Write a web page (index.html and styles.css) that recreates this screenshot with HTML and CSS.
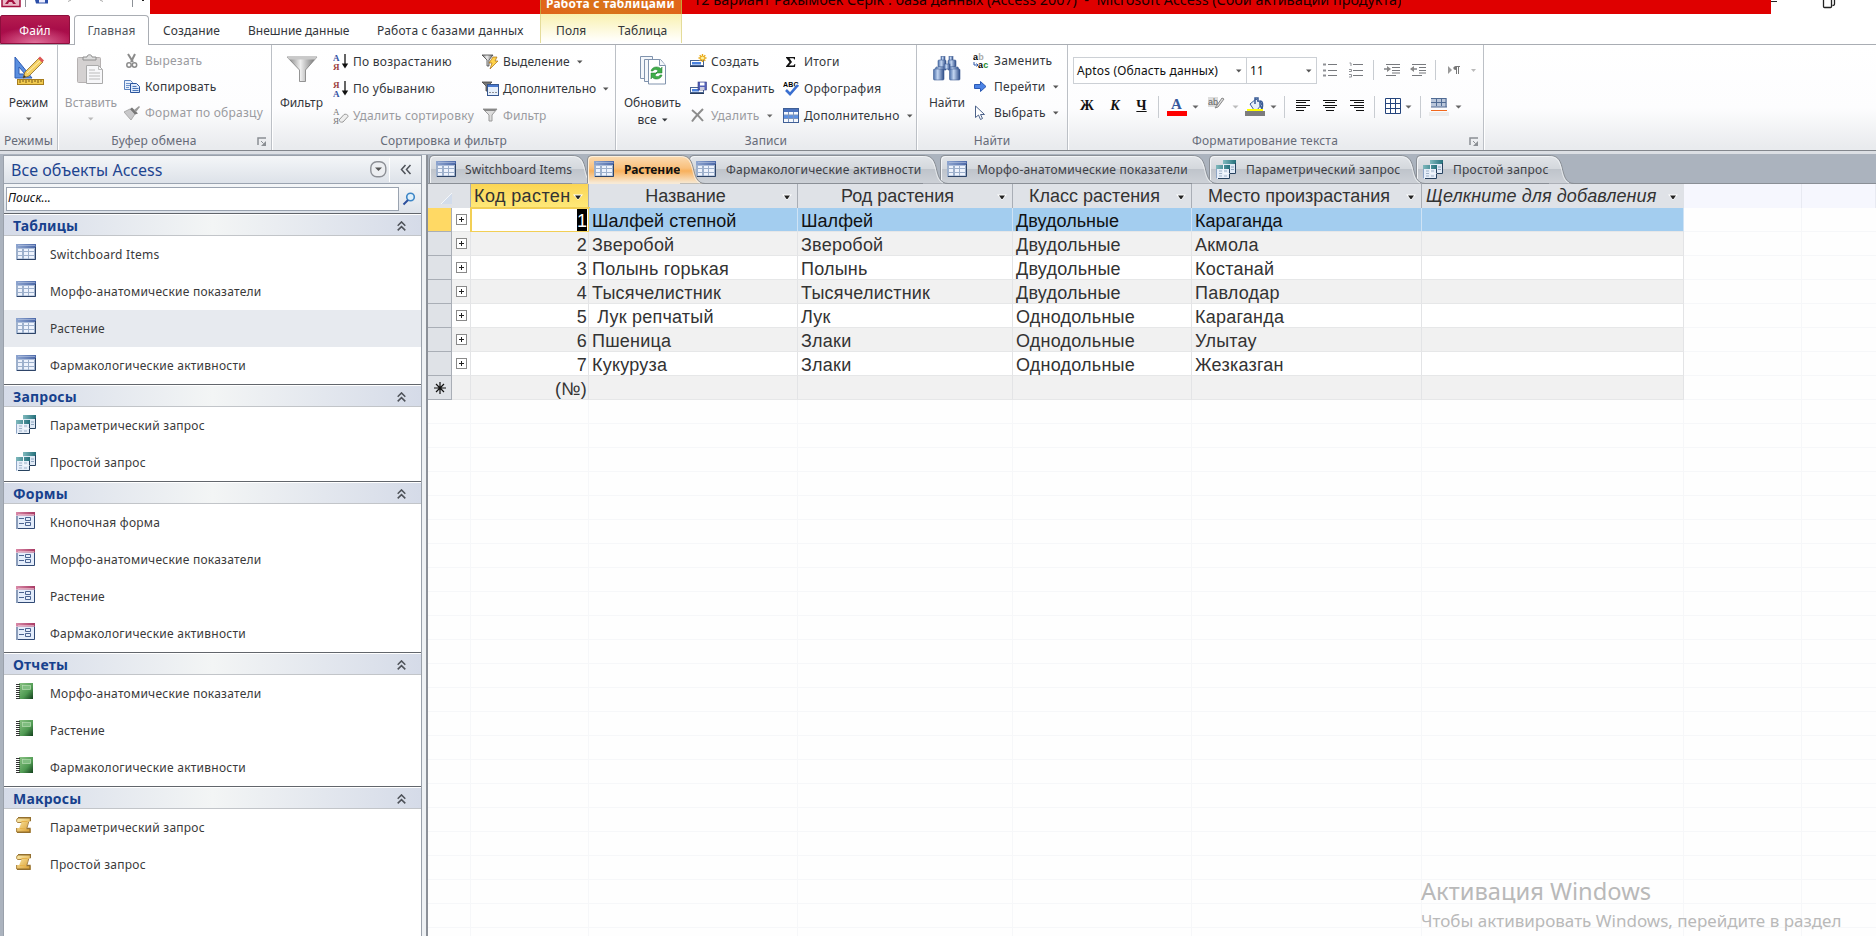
FILE: index.html
```html
<!DOCTYPE html>
<html lang="ru">
<head>
<meta charset="utf-8">
<title>Microsoft Access</title>
<link rel="stylesheet" href="styles.css">
</head>
<body>
<svg class="defs" aria-hidden="true">
  <defs>
    <linearGradient id="gTab" x1="0" y1="0" x2="0" y2="1"><stop offset="0" stop-color="#e2e5e9"/><stop offset=".5" stop-color="#d3d7dc"/><stop offset=".5" stop-color="#bfc4cb"/><stop offset="1" stop-color="#cdd1d7"/></linearGradient>
    <linearGradient id="gAct" x1="0" y1="0" x2="0" y2="1"><stop offset="0" stop-color="#fbdcb4"/><stop offset=".45" stop-color="#f9c07c"/><stop offset=".55" stop-color="#f8b05c"/><stop offset="1" stop-color="#f7ead6"/></linearGradient>
    <linearGradient id="gFun" x1="0" x2="1"><stop offset="0" stop-color="#777"/><stop offset=".45" stop-color="#eee"/><stop offset="1" stop-color="#666"/></linearGradient>
    <linearGradient id="gBlue" x1="0" x2="1"><stop offset="0" stop-color="#4a6ea8"/><stop offset=".4" stop-color="#c3d6f2"/><stop offset="1" stop-color="#2b4a86"/></linearGradient>
    <linearGradient id="gHead" x1="0" x2="1"><stop offset="0" stop-color="#8fa6d0"/><stop offset="1" stop-color="#4c68a8"/></linearGradient>
    <linearGradient id="gTeal" x1="0" x2="1"><stop offset="0" stop-color="#7fb9bd"/><stop offset="1" stop-color="#24707b"/></linearGradient>
    <linearGradient id="gRose" x1="0" x2="1"><stop offset="0" stop-color="#d98aa8"/><stop offset="1" stop-color="#a83a64"/></linearGradient>
    <linearGradient id="gGreen" x1="0" y1="0" x2="1" y2="1"><stop offset="0" stop-color="#8cc486"/><stop offset=".6" stop-color="#4f9a52"/><stop offset="1" stop-color="#123f1c"/></linearGradient>
    <linearGradient id="gGold" x1="0" y1="0" x2="1" y2="1"><stop offset="0" stop-color="#fdf0b4"/><stop offset="1" stop-color="#d99a2a"/></linearGradient>
  </defs>
  <symbol id="table" viewBox="0 0 20 17">
    <rect width="20" height="16" fill="#9db0cc"/><rect width="20" height="4" fill="url(#gHead)"/>
    <path d="M2 4.500h17M2 1.500h17" stroke="#b9c8e4" stroke-width=".6"/>
    <g fill="#eef3fd"><rect x="2" y="5" width="4" height="2"/><rect x="8" y="5" width="4" height="2"/><rect x="13" y="5" width="5" height="2"/><rect x="2" y="8" width="4" height="3"/><rect x="8" y="8" width="4" height="3"/><rect x="13" y="8" width="5" height="3"/><rect x="2" y="12" width="4" height="2.500"/><rect x="8" y="12" width="4" height="2.500"/><rect x="13" y="12" width="5" height="2.500"/></g>
    <path d="M19.500 3v12.500H1" fill="none" stroke="#2e4468"/>
  </symbol>
  <symbol id="query" viewBox="0 0 20 19">
    <rect x="7" width="13" height="14" fill="#dfe9f5"/><rect x="7" width="13" height="4" fill="url(#gTeal)"/><path d="M19.500 3v10.500H8" fill="none" stroke="#27425f"/><path d="M15 7h3M15 9.500h3" stroke="#8fa6bf"/>
    <rect y="5" width="14" height="14" fill="#e6eef9"/><rect y="5" width="14" height="4" fill="url(#gTeal)"/><path d="M.5 9v9.500" stroke="#8fa6c6"/><path d="M13.500 9v9.500H2" fill="none" stroke="#27425f"/><path d="M3 11h3M3 13.500h3M3 16h3M8 11h3M8 13.500h3M8 16h3" stroke="#9fb2c8"/><path d="M7.500 5v8.500h6" fill="none" stroke="#f4f8fc"/>
  </symbol>
  <symbol id="form" viewBox="0 0 19 17">
    <rect width="19" height="17" fill="#e4edfb"/><path d="M0 4h2v13H0z" fill="#8b9dba"/><rect width="19" height="3.500" fill="url(#gRose)"/><path d="M2 2.500h16" stroke="#efc0d0" stroke-width=".7"/><path d="M18.500 3.500v13H2" fill="none" stroke="#314a75"/><path d="M3 6.500h5M3 11.500h5M9.500 5.500h5v3h-5zM9.500 10.500h5v3h-5z" fill="none" stroke="#4a6391"/>
  </symbol>
  <symbol id="report" viewBox="0 0 17 16">
    <rect x="3" width="14" height="16" fill="url(#gGreen)"/><path d="M0 1.500h4M0 3.500h4M0 5.500h4M0 7.500h4M0 9.500h4M0 11.500h4M0 13.500h4M0 15.500h4" stroke="#333"/><rect x="6.500" y="2.500" width="8" height="4" fill="#7fbd80" stroke="#b7dcb2" stroke-width=".7"/>
  </symbol>
  <symbol id="macro" viewBox="0 0 15 16">
    <path d="M1 1h13v3.500h-1.500L10.500 12h4v3.500H.5V11h2.700L5.500 5.500H1.500C0 4.500 0 2 1 1z" fill="url(#gGold)"/><path d="M2 .8h12.500v3.500M10.500 11.500h3.500v3.700H1" stroke="#94702f" stroke-width="1.400" fill="none"/><path d="M12.800 4.500l-2 7M5.500 5.500H1.500C0 4.500.5 2 2 1M.6 11v4" stroke="#a98343" fill="none"/><path d="M5.500 4.500h6M4 11.500h5" stroke="#e6b24a"/>
  </symbol>
  <symbol id="caret" viewBox="0 0 6 4"><path d="M0 .5h5.500L2.750 3.500z" fill="currentColor"/></symbol>
  <symbol id="launch" viewBox="0 0 10 9"><path d="M1 8V1h8" fill="none" stroke="#8b8f94" stroke-width="1.500"/><path d="M4 4l2.500 2.500" stroke="#8b8f94"/><path d="M9 4v5H4z" fill="#8b8f94"/></symbol>
  <symbol id="chev" viewBox="0 0 9 10"><path d="M.7 4.700L4.500.9l3.800 3.800M.7 9.400l3.800-3.800 3.800 3.800" fill="none" stroke="#4e5259" stroke-width="1.500"/></symbol>
  <symbol id="tail" viewBox="0 0 26 29"><path class="fill" d="M0 .5C8 .5 11 4 13 12c2 9 4 16.500 12 16.500H0z"/><path d="M0 .5C8 .5 11 4 13 12c2 9 4 16.500 12 16.500" fill="none" stroke="#8a8f96"/><path d="M0 1.500C7 1.500 10 5 12 12.500c2 8.500 3 13.500 8 15.500" fill="none" stroke="#f4f6f8" stroke-opacity=".7"/></symbol>
  <symbol id="drop" viewBox="0 0 10 6"><path d="M0 .5h10L5 6z" fill="#fff"/><path d="M2 1.500h6L5.500 5h-1z" fill="#222"/></symbol>
</svg>

<header class="title">
  <div class="quick">
    <svg width="150" height="8" viewBox="0 0 150 8"><path d="M2 0v6.500h18V0" fill="#e9b8c6" stroke="#a3123f" stroke-width="1.500"/><path d="M5 4l3-4h5l3 4h-3l-1-2H9L8 4z" fill="#a3123f"/><path d="M25.500 0v7M132.500 0v7" stroke="#8d9197"/><path d="M35 0h13v3.500H36z" fill="#2b4ea8"/><rect x="39" width="6" height="2.500" fill="#eef"/><path d="M68 1.500l3-1.500M100 0l3 1.500" stroke="#aaa"/><rect x="142" width="2" height="1" fill="#222"/></svg>
  </div>
  <div class="titlebar"><div class="context-title"><span>Работа с таблицами</span></div><div class="doc-title"><span>12 вариант Рахымбек Серік : база данных (Access 2007)  -  Microsoft Access (Сбой активации продукта)</span></div></div>
  <svg class="winctl" width="105" height="9" viewBox="0 0 105 9"><path d="M0 1.500h6" stroke="#222"/><path d="M52.500 0v6.500c0 1 .5 1 1 1h6c1 0 1 0 1-1V0M63.500 0v4c0 1-1 1.500-2 1.500" fill="none" stroke="#222" stroke-width="1.300"/></svg>
</header>

<nav class="tabs">
  <span class="tab file">Файл</span><span class="tab home">Главная</span><span class="tab t1">Создание</span><span class="tab t2">Внешние данные</span><span class="tab t3">Работа с базами данных</span>
  <div class="context"><span>Поля</span><span>Таблица</span></div>
</nav>

<section class="ribbon">
  <div class="group g1">
    <div class="body"><div class="big b-mode"><svg width="30" height="30" viewBox="0 0 30 30"><path d="M1 1l17 21H1z" fill="#5a8fe0" stroke="#2d5cb4"/><path d="M5 11l6 7H5z" fill="#fff" stroke="#2d5cb4"/><path d="M9 22l2-6L25 2l4 4-14 14z" fill="#f3cf62" stroke="#8a6a26" stroke-width=".8"/><path d="M13 17L27 4" stroke="#fff3b8"/><path d="M24 2.500L26 .5l4 4-2 2z" fill="#d55"/><path d="M9 22l1-3 2 2z" fill="#333"/><rect x="3.500" y="23.500" width="26" height="5" fill="#f0c94e" stroke="#a77d1d"/><path d="M6 24v3M9 24v2M12 24v3M15 24v2M18 24v3M21 24v2M24 24v3M27 24v2" stroke="#7a5a14"/></svg><b>Режим</b><svg class="car" width="6" height="4"><use href="#caret"/></svg></div></div>
    <footer><span>Режимы</span></footer>
  </div>
  <div class="group g2">
    <div class="body"><div class="big b-paste off"><svg width="28" height="31" viewBox="0 0 28 31"><rect x=".5" y="3.500" width="23" height="25" rx="1" fill="#d4d1d1" stroke="#b5b1b1"/><path d="M6 6V3h4c0-3 5-3 5 0h4v3z" fill="#ddd" stroke="#8e8e8e"/><path d="M9.500 11.500h12l4 4v14h-16z" fill="#f7f7f9" stroke="#aaa"/><path d="M21.500 11.500v4h4M12 16h6M12 19h11M12 22h11M12 25h11" fill="none" stroke="#bbb"/></svg><b>Вставить</b><svg class="car" width="6" height="4"><use href="#caret"/></svg></div>
      <div class="rows r26">
        <div class="off"><svg width="17" height="16" viewBox="0 0 17 16"><path d="M4 1l5 8M11 1L7 9" stroke="#8b8b8b" stroke-width="2" fill="none"/><circle cx="5" cy="12" r="2.200" fill="none" stroke="#8b8b8b" stroke-width="1.500"/><circle cx="10.500" cy="12" r="2.200" fill="none" stroke="#8b8b8b" stroke-width="1.500"/></svg><span>Вырезать</span></div>
        <div><svg width="17" height="16" viewBox="0 0 17 16"><path d="M.5 1.500h6l2 2v7h-8z" fill="#e8f0fc" stroke="#5c83bd"/><path d="M2 4.500h4M2 6.500h4M2 8.500h3" stroke="#6f94cb"/><path d="M6.500 4.500h6l3 3v6h-9z" fill="#dce8fa" stroke="#2a559d"/><path d="M8.500 7.500h4M8.500 9.500h6M8.500 11.500h6" stroke="#4a76b8"/></svg><span>Копировать</span></div>
        <div class="off"><svg width="17" height="16" viewBox="0 0 17 16"><path d="M0 7l6-3 5 5-4 6z" fill="#c8c8ca" stroke="#aaa"/><path d="M6 4l2-1.500 6 6-3 1z" fill="#777"/><path d="M10 5l5-4 1 1-4 5z" fill="#999"/></svg><span>Формат по образцу</span></div>
      </div></div>
    <footer class="with-launch"><span>Буфер обмена</span><svg class="la" width="10" height="9"><use href="#launch"/></svg></footer>
  </div>
  <div class="group g3">
    <div class="body"><div class="big b-filter"><svg width="32" height="28" viewBox="0 0 32 28"><path d="M1 1h30L19.500 14v11.500h-6V14z" fill="url(#gFun)" stroke="#7c7c7c" stroke-width=".8"/><path d="M1 1h30l-2 2.500H3z" fill="#c9c9c9"/></svg><b>Фильтр</b></div>
      <div class="rows r27 sort">
        <div><svg width="16" height="18" viewBox="0 0 16 18"><text x="0" y="8" class="srt" fill="#3453a4">А</text><text x="0" y="17" class="srt" fill="#9c4040">Я</text><path d="M12 1v12" stroke="#111" stroke-width="1.300"/><path d="M8.800 10.500h6.400L12 15.500z" fill="#111"/></svg><span>По возрастанию</span></div>
        <div><svg width="16" height="18" viewBox="0 0 16 18"><text x="0" y="8" class="srt" fill="#9c4040">Я</text><text x="0" y="17" class="srt" fill="#3453a4">А</text><path d="M12 1v12" stroke="#111" stroke-width="1.300"/><path d="M8.800 10.500h6.400L12 15.500z" fill="#111"/></svg><span>По убыванию</span></div>
        <div class="off"><svg width="16" height="18" viewBox="0 0 16 18"><text x="0" y="8" class="srt thin" fill="#777">А</text><text x="0" y="17" class="srt thin" fill="#777">Я</text><path d="M6 13l5-5.500c1-.8 4.500 0 4 2l-5 5.500c-2 .7-4-.5-4-2z" fill="#eee" stroke="#999"/></svg><span>Удалить сортировку</span></div>
      </div>
      <div class="rows r27 filt">
        <div><svg width="17" height="16" viewBox="0 0 17 16"><path d="M0 1h11L7 6v6H5V6z" fill="url(#gFun)" stroke="#444" stroke-width=".8"/><path d="M11 3h4l-2 4h3l-8 8 2-6H7z" fill="#ffd34a" stroke="#a86f14" stroke-width=".7"/></svg><span class="tight">Выделение</span><svg class="car" width="6" height="4"><use href="#caret"/></svg></div>
        <div><svg width="17" height="16" viewBox="0 0 17 16"><path d="M0 1h10L6 5v5H4V5z" fill="#777" stroke="#444" stroke-width=".8"/><rect x="5.500" y="3.500" width="11" height="11" fill="#e6effb" stroke="#35568f"/><rect x="6" y="4" width="10" height="2" fill="#4a7ad0"/><path d="M7.500 11.500h1M10.500 11.500h1M13.500 11.500h1" stroke="#333"/></svg><span class="tight">Дополнительно</span><svg class="car" width="6" height="4"><use href="#caret"/></svg></div>
        <div class="off"><svg width="17" height="16" viewBox="0 0 17 16"><path d="M1 1h14L10 7v6H7V7z" fill="#ddd" stroke="#999"/><path d="M1 1h14l-2 2H3z" fill="#888"/></svg><span class="tight">Фильтр</span></div>
      </div></div>
    <footer><span>Сортировка и фильтр</span></footer>
  </div>
  <div class="group g4">
    <div class="body"><div class="big b-refresh"><svg width="26" height="30" viewBox="0 0 26 30"><g fill="#f4f7fb" stroke="#8093ad"><path d="M.5.5h12v22H.500z"/><path d="M4.500 3.500h12v22h-12z"/><path d="M8.500 3.500h12l5 6v18.500h-17z" fill="#fff"/><path d="M19.500 3.500v6h6"/></g><path d="M11 15c1-5 8-5 10-2l1-2v6h-6l2-2c-1-2-4-2-5 0z" fill="#3fae49" stroke="#18792a" stroke-width=".5"/><path d="M22 19c-1 5-8 5-10 2l-1 2v-6h6l-2 2c1 2 4 2 5 0z" fill="#3fae49" stroke="#18792a" stroke-width=".5"/></svg><b>Обновить</b><b class="two">все <svg width="6" height="4"><use href="#caret"/></svg></b></div>
      <div class="rows r27 rec1">
        <div><svg width="17" height="16" viewBox="0 0 17 16"><rect x=".5" y="6.500" width="13" height="5" fill="#fff" stroke="#48638f"/><rect x="2" y="8" width="9" height="2.500" fill="#4a82df"/><path d="M0 12.500h14" stroke="#273a5c"/><path d="M12.500 0v8M8.500 4h8M9.700 1.200l5.600 5.600M15.300 1.200L9.700 6.800" stroke="#e8a916" stroke-width="1.400"/><circle cx="12.500" cy="4" r="1.600" fill="#fff2a0"/></svg><span>Создать</span></div>
        <div><svg width="17" height="16" viewBox="0 0 17 16"><rect x=".5" y="6.500" width="13" height="5" fill="#fff" stroke="#48638f"/><rect x="2" y="8" width="7" height="2.500" fill="#4a82df"/><path d="M0 12.500h14" stroke="#273a5c"/><rect x="8" y="1" width="8.500" height="8" fill="#5260b8" stroke="#333a80" stroke-width=".6"/><rect x="10" y="1.500" width="4.500" height="3" fill="#fff"/><rect x="10" y="6" width="4.500" height="3" fill="#ccd"/></svg><span>Сохранить</span></div>
        <div class="off"><svg width="17" height="16" viewBox="0 0 17 16"><path d="M2 2c4 3 7 6 11 11M13 1C9 5 5 9 2 13.500" stroke="#8c8c8c" stroke-width="2" fill="none"/></svg><span>Удалить</span><svg class="car dk" width="6" height="4"><use href="#caret"/></svg></div>
      </div>
      <div class="rows r27 rec2">
        <div><svg width="17" height="16" viewBox="0 0 17 16"><path d="M3 3h9v2.500h-.7c-.3-1-.8-1.200-2-1.200H6.500L9 8l-3 3.500h3.500c1.200 0 1.700-.5 2-1.500h.8L12 13H3v-.8L6.500 8 3 3.700z" fill="#111"/></svg><span>Итоги</span></div>
        <div><svg width="17" height="16" viewBox="0 0 17 16"><text x="0" y="6" class="abc">ABC</text><path d="M3 9l4 4 8-9" fill="none" stroke="#3a6fd0" stroke-width="2.600"/></svg><span>Орфография</span></div>
        <div><svg width="17" height="16" viewBox="0 0 17 16"><rect x=".5" y=".5" width="15" height="14" fill="#f5f8fd" stroke="#3f5f96"/><rect x="1" y="1" width="14" height="3" fill="#4b72bd"/><rect x="1" y="7" width="14" height="3.500" fill="#5b90e4"/><path d="M5.500 4v10M10.500 4v10M1 7h14M1 10.500h14" stroke="#7b95bf"/></svg><span>Дополнительно</span><svg class="car" width="6" height="4"><use href="#caret"/></svg></div>
      </div></div>
    <footer><span>Записи</span></footer>
  </div>
  <div class="group g5">
    <div class="body"><div class="big b-find"><svg width="28" height="25" viewBox="0 0 28 25"><g fill="url(#gBlue)" stroke="#425f96" stroke-width=".6"><rect x="8" y=".5" width="4" height="4"/><rect x="16" y=".5" width="4" height="4"/><rect x="5" y="4" width="8" height="7" rx="1"/><rect x="15" y="4" width="8" height="7" rx="1"/><path d="M3 11h10v3H2z"/><path d="M15 11h10l1 3H15z"/><rect x=".5" y="13" width="10.500" height="11" rx="1"/><rect x="16.500" y="13" width="10.500" height="11" rx="1"/><rect x="11" y="8" width="6" height="5"/></g></svg><b>Найти</b></div>
      <div class="rows r26 find">
        <div><svg width="17" height="17" viewBox="0 0 17 17"><text x="0" y="7" class="ab">a<tspan fill="#aaa">b</tspan></text><text x="5" y="15" class="ab">a<tspan fill="#1d8a2c">c</tspan></text><path d="M1 9v3h4M3.500 10.500l1.500 1.500-1.500 1.500" fill="none" stroke="#2d57a8"/></svg><span>Заменить</span></div>
        <div><svg width="17" height="16" viewBox="0 0 17 16"><path d="M1.500 5.500h6v-3l5.500 5-5.500 5v-3h-6z" fill="#4b83e6" stroke="#2b59b3"/></svg><span>Перейти</span><svg class="car" width="6" height="4"><use href="#caret"/></svg></div>
        <div><svg width="17" height="16" viewBox="0 0 17 16"><path d="M2.500 1v11.500l3-2.500 2 4.500 2-1-2-4h4z" fill="#fff" stroke="#4c628a"/></svg><span>Выбрать</span><svg class="car" width="6" height="4"><use href="#caret"/></svg></div>
      </div></div>
    <footer><span>Найти</span></footer>
  </div>
  <div class="group g6">
    <div class="fmt1">
      <div class="combo font"><span>Aptos (Область данных)</span><svg width="6" height="4"><use href="#caret"/></svg></div><div class="combo size"><span>11</span><svg width="6" height="4"><use href="#caret"/></svg></div>
      <svg width="164" height="26" viewBox="1317 57 164 26"><g fill="none" stroke="#77797d"><path d="M1328 64.500h9M1328 70.500h9M1328 75.500h9M1353 64.500h10M1353 70.500h10M1353 75.500h10"/><path d="M1323 64.500h3M1323 70.500h3M1323 75.500h3" stroke-width="2" stroke="#8f9196"/><path d="M1349.500 63h1.500v3M1349 69.500h2.500v2h-2.500M1349 74.500h2.500v2.500h-2.500" stroke-width="1" stroke="#8f9196"/><path d="M1373.500 60v20M1435.500 60v20" stroke="#c8ccd1"/><path d="M1386 64.500h14M1392 67.500h8M1392 70.500h8M1392 73h8M1386 75.500h10M1412 64.500h14M1419 67.500h7M1419 70.500h7M1419 73h7M1412 75.500h10" stroke-width="1.200"/><path d="M1384 69h5M1411 69h6" stroke-width="2" stroke="#a0a2a6"/></g><path d="M1387 66l4 3-4 3zM1414 66l-4 3 4 3z" fill="#888"/><path d="M1448 66l4 4-4 4z" fill="#999"/><path d="M1460 66v1h-1v7h-1v-7h-1v7h-1v-4c-3.500 0-3.500-4 0-4z" fill="#777"/><path d="M1471 69h5l-2.500 3z" fill="#bbb"/></svg>
    </div>
    <div class="fmt2">
      <i class="z">Ж</i><i class="k">К</i><i class="u">Ч</i>
      <svg width="310" height="24" viewBox="1155 95 310 24"><g fill="none" stroke="#c8ccd1"><path d="M1158.500 96v22M1284.500 96v22M1374.500 96v22M1420.500 96v22"/></g><text x="1171" y="109" class="fa">A</text><rect x="1167" y="111" width="20" height="5" fill="#fe0000"/><g fill="#666"><path d="M1192.500 105.500h6l-3 3zM1270.500 105.500h6l-3 3zM1405.500 105.500h6l-3 3zM1455.500 105.500h6l-3 3z"/><path d="M1232.500 105.500h6l-3 3z" fill="#bbb"/></g><rect x="1208" y="97" width="10" height="10" fill="#ddd"/><text x="1208" y="105" class="hl">ab</text><path d="M1215 108l7-10 2 1-6 8z" fill="#ddd" stroke="#888"/><path d="M1250 104l6-5 6 5-5 6h-3z" fill="#e7effa" stroke="#3a5c97"/><path d="M1255 104v-6h3v4M1260 101c3 0 3 4 2 8l-2-4z" fill="none" stroke="#3a5c97" stroke-width="1.500"/><path d="M1247 110h16" stroke="#ff0" stroke-width="2"/><rect x="1245" y="111" width="20" height="5" fill="#7d7d7d"/><path d="M1296 100.500h14M1296 102.500h10M1296 105.500h14M1296 107.500h10M1296 110.500h8M1323 100.500h14M1325 102.500h10M1323 105.500h14M1325 107.500h10M1326 110.500h8M1350 100.500h14M1354 102.500h10M1350 105.500h14M1354 107.500h10M1356 110.500h8" stroke="#111"/><path d="M1385.500 98.500h15v15h-15zM1390.500 98v16M1395.500 98v16M1386 103.500h15M1386 108.500h15" fill="#fff" stroke="#24447c"/><rect x="1431" y="98" width="16" height="9" fill="#b9c6da"/><path d="M1431 98.500h15M1431 102.500h15M1436.500 98v8M1441.500 98v8M1431 107h16M1446 98v9" stroke="#506b94"/><path d="M1431 110.500h16" stroke="#f2681c"/><rect x="1429" y="112" width="20" height="4" fill="#ececec"/></svg>
    </div>
    <footer class="with-launch"><span>Форматирование текста</span><svg class="la" width="10" height="9"><use href="#launch"/></svg></footer>
  </div>
</section>

<main class="work">
  <aside class="nav">
    <div class="navhead"><span>Все объекты Access</span><svg width="50" height="24" viewBox="0 0 50 24"><rect x=".8" y="3.800" width="15" height="15" rx="6" fill="#eceef1" stroke="#8d9096" stroke-width="1.400"/><path d="M5 9.500h7L8.500 13z" fill="#555"/><path d="M19.500 0v24" stroke="#fff"/><path d="M35.500 7l-4 4.500 4 4.500M40.500 7l-4 4.500 4 4.500" fill="none" stroke="#4e5259" stroke-width="1.500"/></svg></div>
    <div class="search"><div>Поиск...</div><svg width="14" height="14" viewBox="0 0 14 14"><circle cx="8.500" cy="5" r="3.800" fill="#dff0fb" stroke="#3d86c6" stroke-width="1.600"/><path d="M6 8l-4.500 4.500" stroke="#2c4f9c" stroke-width="2"/></svg></div>
    <section><h2>Таблицы<svg width="9" height="10"><use href="#chev"/></svg></h2>
      <p><svg width="20" height="17"><use href="#table"/></svg>Switchboard Items</p><p><svg width="20" height="17"><use href="#table"/></svg>Морфо-анатомические показатели</p><p class="sel"><svg width="20" height="17"><use href="#table"/></svg>Растение</p><p><svg width="20" height="17"><use href="#table"/></svg>Фармакологические активности</p></section>
    <section><h2>Запросы<svg width="9" height="10"><use href="#chev"/></svg></h2>
      <p><svg width="20" height="19"><use href="#query"/></svg>Параметрический запрос</p><p><svg width="20" height="19"><use href="#query"/></svg>Простой запрос</p></section>
    <section><h2>Формы<svg width="9" height="10"><use href="#chev"/></svg></h2>
      <p><svg width="19" height="17"><use href="#form"/></svg>Кнопочная форма</p><p><svg width="19" height="17"><use href="#form"/></svg>Морфо-анатомические показатели</p><p><svg width="19" height="17"><use href="#form"/></svg>Растение</p><p><svg width="19" height="17"><use href="#form"/></svg>Фармакологические активности</p></section>
    <section><h2>Отчеты<svg width="9" height="10"><use href="#chev"/></svg></h2>
      <p><svg width="17" height="16"><use href="#report"/></svg>Морфо-анатомические показатели</p><p><svg width="17" height="16"><use href="#report"/></svg>Растение</p><p><svg width="17" height="16"><use href="#report"/></svg>Фармакологические активности</p></section>
    <section><h2>Макросы<svg width="9" height="10"><use href="#chev"/></svg></h2>
      <p><svg width="15" height="16"><use href="#macro"/></svg>Параметрический запрос</p><p><svg width="15" height="16"><use href="#macro"/></svg>Простой запрос</p></section>
  </aside>
  <div class="doc">
    <div class="doctabs">
      <div class="dt d1"><div><svg width="20" height="17"><use href="#table"/></svg><span>Switchboard Items</span></div><svg class="tl" width="26" height="29"><use href="#tail"/></svg></div>
      <div class="dt d2 act"><div><svg width="20" height="17"><use href="#table"/></svg><span>Растение</span></div><svg class="tl" width="26" height="29"><use href="#tail"/></svg></div>
      <div class="dt d3"><div><svg width="20" height="17"><use href="#table"/></svg><span>Фармакологические активности</span></div><svg class="tl" width="26" height="29"><use href="#tail"/></svg></div>
      <div class="dt d4"><div><svg width="20" height="17"><use href="#table"/></svg><span>Морфо-анатомические показатели</span></div><svg class="tl" width="26" height="29"><use href="#tail"/></svg></div>
      <div class="dt d5"><div><svg width="20" height="19"><use href="#query"/></svg><span>Параметрический запрос</span></div><svg class="tl" width="26" height="29"><use href="#tail"/></svg></div>
      <div class="dt d6"><div><svg width="20" height="19"><use href="#query"/></svg><span>Простой запрос</span></div><svg class="tl" width="26" height="29"><use href="#tail"/></svg></div>
    </div>
    <div class="sheet">
      <div class="row head"><div class="corner"><svg width="11" height="11" viewBox="0 0 11 11"><path d="M11 0v11H0z" fill="#d2dceb"/><path d="M0 11L11 0" stroke="#f4f7fa"/></svg></div><div class="cur"><span>Код растен</span><svg width="10" height="6"><use href="#drop"/></svg></div><div><span>Название</span><svg width="10" height="6"><use href="#drop"/></svg></div><div><span>Род растения</span><svg width="10" height="6"><use href="#drop"/></svg></div><div><span>Класс растения</span><svg width="10" height="6"><use href="#drop"/></svg></div><div><span>Место произрастания</span><svg width="10" height="6"><use href="#drop"/></svg></div><div class="add"><span>Щелкните для добавления</span><svg width="10" height="6"><use href="#drop"/></svg></div><div class="void"></div><div class="void"></div></div>
      <div class="row on"><div class="s"></div><div class="x"><em></em></div><div class="n"><mark>1</mark></div><div>Шалфей степной</div><div>Шалфей</div><div>Двудольные</div><div>Караганда</div><div></div></div>
      <div class="row alt"><div class="s"></div><div class="x"><em></em></div><div class="n">2</div><div>Зверобой</div><div>Зверобой</div><div>Двудольные</div><div>Акмола</div><div></div></div>
      <div class="row"><div class="s"></div><div class="x"><em></em></div><div class="n">3</div><div>Полынь горькая</div><div>Полынь</div><div>Двудольные</div><div>Костанай</div><div></div></div>
      <div class="row alt"><div class="s"></div><div class="x"><em></em></div><div class="n">4</div><div>Тысячелистник</div><div>Тысячелистник</div><div>Двудольные</div><div>Павлодар</div><div></div></div>
      <div class="row"><div class="s"></div><div class="x"><em></em></div><div class="n">5</div><div>&nbsp;Лук репчатый</div><div>Лук</div><div>Однодольные</div><div>Караганда</div><div></div></div>
      <div class="row alt"><div class="s"></div><div class="x"><em></em></div><div class="n">6</div><div>Пшеница</div><div>Злаки</div><div>Однодольные</div><div>Улытау</div><div></div></div>
      <div class="row"><div class="s"></div><div class="x"><em></em></div><div class="n">7</div><div>Кукуруза</div><div>Злаки</div><div>Однодольные</div><div>Жезказган</div><div></div></div>
      <div class="row alt"><div class="s"><svg width="12" height="12" viewBox="0 0 12 12"><path d="M6 0v12M0 6h12M2 2l8 8M10 2l-8 8" stroke="#111" stroke-width="1.200"/></svg></div><div class="x"></div><div class="n">(№)</div><div></div><div></div><div></div><div></div><div></div></div>
    </div>
    <div class="watermark"><strong>Активация Windows</strong><span>Чтобы активировать Windows, перейдите в раздел</span></div>
  </div>
</main>
</body>
</html>
```
FILE: styles.css
```css
* { box-sizing: border-box; }
html, body { margin: 0; height: 936px; overflow: hidden; }
body { width: 1876px; background: #fff; color: #33363b; font: 12px/16px "Noto Sans", "Open Sans", sans-serif; white-space: nowrap; display: flex; flex-direction: column; }
svg { display: block; flex: none; }
.defs { position: absolute; width: 0; height: 0; }

/* title bar */
.title { display: flex; height: 14px; flex: none; overflow: hidden; }
.quick { width: 150px; }
.titlebar { display: flex; width: 1621px; height: 14px; background: #df0000; padding-left: 390px; }
.context-title { width: 142px; height: 14px; background: linear-gradient(90deg, #e0651a, #d87419 50%, #e0651a); border: solid #c9a13a; border-width: 0 1px; padding-left: 5px; color: #fff; font-weight: bold; overflow: hidden; }
.context-title span { display: block; line-height: 16px; margin-top: -4px; letter-spacing: .25px; }
.doc-title { padding-left: 11px; color: #1a0000; font-size: 14.35px; overflow: hidden; }
.doc-title span { display: block; line-height: 20px; margin-top: -10px; white-space: pre; }

/* ribbon tabs */
.tabs { display: flex; height: 31px; flex: none; border-bottom: 1px solid #a9adb3; padding-top: 1px; line-height: 32px; letter-spacing: .12px; }
.tab { flex: none; height: 29px; }
.file { width: 70px; text-align: center; color: #fff; border-radius: 2px 2px 0 0; border: 1px solid #8d0f3d; background: radial-gradient(ellipse 60% 60% at 50% 100%, #e0709a, transparent), linear-gradient(#b51d50, #a80d49 50%, #b3104f); line-height: 30px; }
.home { width: 75px; margin-left: 4px; height: 30px; border: 1px solid #a9adb3; border-bottom: 0; border-radius: 4px 4px 0 0; background: #fff; text-align: center; color: #50555c; line-height: 30px; margin-right: 14px; }
.t1 { width: 85px; } .t2 { width: 129px; letter-spacing: 0; } .t3 { width: 163px; letter-spacing: .2px; }
.context { display: flex; width: 142px; height: 29px; margin-top: -1px; background: linear-gradient(#f9f1b0, #fffef6 85%, #fff); border: solid #e4dc9a; border-width: 0 1px; padding-left: 15px; line-height: 34px; }
.context span:first-child { width: 62px; }

/* ribbon */
.ribbon { display: flex; flex: none; height: 106px; background: linear-gradient(#fff, #fdfdfe 60%, #e9ebee 97%); border-bottom: 1px solid #83878d; }
.group { flex: none; height: 105px; border-right: 1px solid #bcc0c6; box-shadow: 1px 0 #fff; display: flex; flex-direction: column; }
.g1 { width: 58px; } .g2 { width: 214px; } .g3 { width: 344px; } .g4 { width: 301px; } .g5 { width: 151px; } .g6 { width: 416px; }
.body { display: flex; height: 87px; }
footer { display: flex; justify-content: center; height: 16px; line-height: 17px; color: #666b78; position: relative; letter-spacing: .1px; }
.with-launch { padding-right: 21px; letter-spacing: .2px; }
.la { position: absolute; right: 4px; top: 5px; }
.big { display: flex; flex-direction: column; align-items: center; flex: none; }
.big > svg:first-child { margin-bottom: auto; }
.big b { font-weight: normal; line-height: 16px; height: 17px; }
.big .car { margin: 5px 0 11px; color: #666; }
.off { color: #9a9ba0; }
.off .car { color: #bbb; }
.off .car.dk { color: #666; }
.b-mode { width: 57px; padding-top: 11px; }
.b-paste { width: 66px; padding: 9px 0 0; }
.b-filter { width: 61px; padding: 11px 2px 20px 0; }
.b-refresh { width: 73px; padding-top: 11px; }
.big.b-refresh .two { display: flex; align-items: center; gap: 5px; height: 20px; line-height: 14px; padding-bottom: 4px; }
.b-find { width: 60px; padding: 11px 0 20px; margin-right: -4px; }
.rows { display: flex; flex-direction: column; letter-spacing: .25px; }
.rows > div { display: flex; align-items: center; height: 26px; }
.r26 { padding-top: 3px; }
.r27 { padding-top: 3px; }
.r27 > div { height: 27px; }
.rows span { margin-left: 4px; }
.rows .tight { letter-spacing: .08px; }
.rows .car { margin-left: 7px; }
.rows > div:not(.off) .car { color: #555; }
.sort { width: 149px; }
.rec1 { margin-left: 1px; width: 93px; }
.srt { font: bold 9px "Liberation Serif", serif; }
.thin { font-weight: normal; }
.abc { font: bold 7px "Liberation Sans", sans-serif; }
.ab { font: bold 9px "Liberation Sans", sans-serif; }
.hl { font: 9px "Liberation Sans", sans-serif; fill: #666; }
.fa { font: bold 15px "Liberation Serif", serif; fill: #34589c; }
.fmt1 { display: flex; padding: 12px 0 0 5px; height: 50px; }
.combo { display: flex; align-items: center; height: 27px; border: 1px solid #ccd0d5; background: #fff; color: #111; padding: 0 4px 0 3px; justify-content: space-between; letter-spacing: .15px; }
.combo svg { color: #555; }
.font { width: 174px; } .size { width: 70px; border-left: 0; }
.fmt2 { display: flex; height: 37px; }
.fmt2 i { font: bold 14px/16px "Liberation Serif", serif; color: #111; text-align: center; width: 28px; margin-top: 3px; }
.fmt2 .z { font-style: normal; margin-left: 4px; width: 30px; } .fmt2 .k { font-style: italic; width: 26px; } .fmt2 .u { font-style: normal; text-decoration: underline; width: 27px; }

/* workspace */
.work { display: flex; flex: 1; background: #abb3be; border-top: 3px solid #dcdfe4; padding-top: 1px; min-height: 0; }
.nav { width: 419px; margin-left: 3px; background: #fff; border: 1px solid #9aa1ab; border-bottom: 0; flex: none; }
.navhead { display: flex; justify-content: space-between; align-items: center; height: 28px; padding: 0 9px 0 7px; background: linear-gradient(#f4f6f8, #dde2e9); border-bottom: 1px solid #9aa3b0; color: #1e4590; font-size: 16px; letter-spacing: .03px; }
.navhead svg { margin-right: -8px; }
.search { display: flex; align-items: center; height: 29px; padding: 0 5px 0 2px; background: linear-gradient(#f4f6f8, #dde2e9); }
.search div { width: 393px; height: 24px; border: 1px solid #9aa3b0; background: #fff; font: italic 12px/20px "Noto Sans", sans-serif; padding-left: 1px; color: #111; letter-spacing: .1px; margin-right: 3px; }
.nav h2 { display: flex; align-items: center; justify-content: space-between; margin: 0; height: 23px; border-top: 1px solid #62666c; border-bottom: 1px solid #c2c5c9; box-shadow: inset 0 1px #fff; background: linear-gradient(90deg, #d5dbe8, #f3f5f5 50%, #d5dbe8); font: bold 14px/20px "Noto Sans", sans-serif; color: #17418d; padding: 2px 15px 0 9px; letter-spacing: .2px; }
.nav p { margin: 0; height: 37px; display: flex; padding: 8px 0 0 12px; line-height: 22px; color: #3a3a3a; letter-spacing: .24px; }
.nav p svg { margin-right: 14px; }
.nav p svg[width="19"] { margin-right: 15px; }
.nav p svg[width="17"] { margin-right: 17px; }
.nav p svg[width="15"] { margin-right: 19px; }
.sel { background: #e7eaef; }
.doc { position: relative; flex: 1; border-left: 2px solid #8b9098; display: flex; flex-direction: column; margin-left: 4px; box-shadow: -4px 0 #eef1f4; min-width: 0; }
.doctabs { display: flex; height: 29px; padding-left: 1px; box-shadow: inset 0 -1px #8a8f96; flex: none; letter-spacing: .22px; }
.dt { display: flex; margin-right: -9px; position: relative; color: #3d4046; flex: none; }
.dt > div { flex: 1; display: flex; align-items: center; height: 29px; padding-left: 6px; border: solid #8a8f96; border-width: 1px 0 1px 1px; border-radius: 5px 0 0 0; background: linear-gradient(#e2e5e9, #d3d7dc 50%, #bfc4cb 50%, #cdd1d7); box-shadow: inset 1px 1px #f2f4f6; }
.dt span { margin-left: 10px; }
.d1 span { margin-left: 9px; letter-spacing: .1px; }
.act { font-weight: bold; color: #111; letter-spacing: -.05px; }
.dt .tl { fill: url(#gTab); }
.dt.act .tl { fill: url(#gAct); }
.act > div { background: linear-gradient(#fbdcb4, #f9c07c 45%, #f8b05c 55%, #f7ead6); border-bottom-color: #f7ead6; box-shadow: inset 1px 1px #fdf0dc; }
.d1 { width: 167px; z-index: 6; } .d2 { width: 111px; z-index: 7; } .d3 { width: 260px; z-index: 5; } .d4 { width: 278px; z-index: 4; } .d5 { width: 216px; z-index: 3; } .d6 { width: 153px; z-index: 2; }
.sheet { flex: 1; font: 18px/24px "Liberation Sans", Arial, sans-serif; color: #333;
  background:
    linear-gradient(#f6f7f9, #f6f7f9) 160px 0/1px 100% no-repeat, linear-gradient(#f6f7f9, #f6f7f9) 369px 0/1px 100% no-repeat,
    linear-gradient(#f6f7f9, #f6f7f9) 584px 0/1px 100% no-repeat, linear-gradient(#f6f7f9, #f6f7f9) 763px 0/1px 100% no-repeat,
    linear-gradient(#f6f7f9, #f6f7f9) 993px 0/1px 100% no-repeat, linear-gradient(#f6f7f9, #f6f7f9) 1255px 0/1px 100% no-repeat,
    linear-gradient(#f6f7f9, #f6f7f9) 1373px 0/1px 100% no-repeat, linear-gradient(#f6f7f9, #f6f7f9) 42px 0/1px 100% no-repeat,
    repeating-linear-gradient(#fefefe 0 23px, #f6f7f9 23px 24px); }
.row { display: grid; grid-template-columns: 24px 19px 118px 209px 215px 179px 230px 262px 118px 1fr; height: 24px; }
.row > div { border-right: 1px solid #e3e4e6; border-bottom: 1px solid #e6e7e8; padding-left: 3px; background: #fff; white-space: pre; height: 24px; line-height: 26px; letter-spacing: .22px; }
.row.alt > div { background: #f1f1f1; }
.row.on > div { background: #a3cdef; color: #111; border-right-color: #cfe3f5; letter-spacing: .05px; }
.row.row > .s { background: #dfe2e7; border-color: #a9aeb6; padding: 6px 0 0 6px; }
.row.on > .s { background: #ffd964; }
.row.row > .x { padding: 6px 0 0 4px; }
.row.on > .x { background: #fff; }
.x em { display: block; width: 11px; height: 11px; border: 1px solid #8a8a8a; background: linear-gradient(#222, #222) center/5px 1px no-repeat, linear-gradient(#222, #222) center/1px 5px no-repeat, #fff; }
.row > .n { text-align: right; padding-right: 1px; }
.row.on > .n { background: #fff; outline: 2px solid #f2cf55; outline-offset: -1px; }
mark { display: inline-block; height: 22px; background: #000; color: #fff; line-height: 25px; vertical-align: top; margin-top: 1px; }
.row.head > div { background: #dfe2e7; border-bottom: 0; border-right-color: #a9aeb6; display: flex; align-items: center; padding: 0 5px 0 0; letter-spacing: 0; }
.head span { flex: 1; text-align: center; line-height: 24px; }
.head > .corner { grid-column: span 2; justify-content: center; }
.head > .corner svg { margin-top: 4px; }
.head svg { margin-top: 2px; }
.row.head > .cur { background: linear-gradient(#fbd554, #fee97a); letter-spacing: .4px; }
.row.head > .cur span { text-align: left; padding-left: 3px; }
.row.head > .add { font-style: italic; border-right-color: #dfe2e7; letter-spacing: .1px; }
.row.head > .add span { text-align: left; padding-left: 4px; }
.row.head > .void { background: #f6f7fe; border-right-color: #e8eaf2; }
.watermark { position: absolute; left: 993px; top: 721px; color: #b9b9b9; }
.watermark strong { display: block; font: 23.700px/30px "Noto Sans", sans-serif; }
.watermark span { display: block; font-size: 17px; line-height: 29px; }
```
